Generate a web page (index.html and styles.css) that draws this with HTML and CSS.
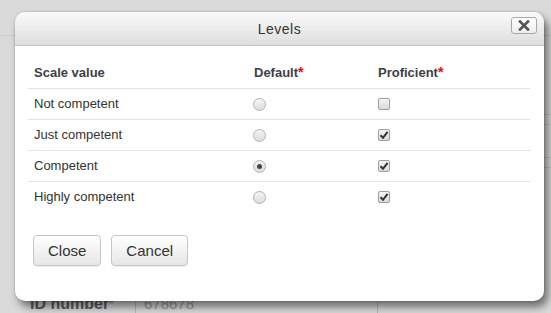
FILE: index.html
```html
<!DOCTYPE html>
<html>
<head>
<meta charset="utf-8">
<link rel="stylesheet" href="styles.css">
</head>
<body>
<div class="page">
  <div class="topline"></div>
  <div class="rightlines">
    <div class="rl rl1"></div>
    <div class="rl rl2"></div>
    <div class="rl rl3"></div>
    <div class="rl rl4"></div>
  </div>
  <div class="formrow">
    <div class="flabel">ID number<span class="freq">*</span></div>
    <div class="fvalue">678678</div>
    <div class="fextra"></div>
  </div>
</div>

<div class="dialog">
  <div class="dlg-head">
    <span></span>
    <span class="dlg-title">Levels</span>
    <button class="dlg-close" type="button">
      <svg width="12" height="11" viewBox="0 0 12 11"><path d="M2 1.5 L10 9.5 M10 1.5 L2 9.5" stroke="#555" stroke-width="2.6" stroke-linecap="square"/></svg>
    </button>
  </div>
  <div class="dlg-body">
    <table class="levels">
      <thead>
        <tr>
          <th class="c1">Scale value</th>
          <th class="c2">Default<span class="req">*</span></th>
          <th class="c3">Proficient<span class="req">*</span></th>
        </tr>
      </thead>
      <tbody>
        <tr>
          <td>Not competent</td>
          <td><span class="radio"></span></td>
          <td><span class="check"></span></td>
        </tr>
        <tr>
          <td>Just competent</td>
          <td><span class="radio"></span></td>
          <td><span class="check on"><svg width="10" height="10" viewBox="0 0 10 10"><path d="M1.5 5.2 L4 7.8 L8.6 1.8" fill="none" stroke="#333" stroke-width="2"/></svg></span></td>
        </tr>
        <tr>
          <td>Competent</td>
          <td><span class="radio on"></span></td>
          <td><span class="check on"><svg width="10" height="10" viewBox="0 0 10 10"><path d="M1.5 5.2 L4 7.8 L8.6 1.8" fill="none" stroke="#333" stroke-width="2"/></svg></span></td>
        </tr>
        <tr>
          <td>Highly competent</td>
          <td><span class="radio"></span></td>
          <td><span class="check on"><svg width="10" height="10" viewBox="0 0 10 10"><path d="M1.5 5.2 L4 7.8 L8.6 1.8" fill="none" stroke="#333" stroke-width="2"/></svg></span></td>
        </tr>
      </tbody>
    </table>
    <div class="actions">
      <button class="btn" type="button">Close</button>
      <button class="btn" type="button">Cancel</button>
    </div>
  </div>
</div>
</body>
</html>
```

FILE: styles.css
```css
html, body {
  margin: 0;
  padding: 0;
}
body {
  width: 551px;
  height: 313px;
  overflow: hidden;
  background: #dadada;
  font-family: "Liberation Sans", Arial, sans-serif;
  position: relative;
}
.page {
  width: 551px;
  height: 313px;
  position: relative;
}
.topline {
  height: 35px;
  border-bottom: 1px solid #cbcbcb;
}
.rightlines {
  margin-left: 544px;
  padding-top: 78px;
}
.rl {
  height: 0;
  border-top: 1px solid #c6c6c6;
}
.rl1 { margin-bottom: 9px; }
.rl2 { margin-bottom: 32px; }
.rl3 { margin-bottom: 9px; }
.formrow {
  position: absolute;
  left: 0;
  top: 292px;
  width: 551px;
  display: flex;
  height: 21px;
}
.flabel {
  width: 105px;
  padding-left: 30px;
  font-weight: bold;
  font-size: 16px;
  color: #5d5d63;
  line-height: 24px;
  border-right: 1px solid #b8b8b8;
}
.freq {
  color: #d08a8a;
  font-size: 12px;
  vertical-align: top;
}
.fvalue {
  width: 233px;
  padding-left: 8px;
  color: #9a9a9a;
  font-size: 15px;
  line-height: 24px;
  border-right: 1px solid #b8b8b8;
}
.dialog {
  position: absolute;
  left: 15px;
  top: 12px;
  width: 529px;
  background: #fff;
  border-radius: 10px;
  box-shadow: 4px 6px 9px rgba(0, 0, 0, 0.5), 0 0 2px rgba(0, 0, 0, 0.25);
  overflow: hidden;
}
.dlg-head {
  height: 33px;
  border-bottom: 1px solid #c4c4c4;
  background: linear-gradient(#fafafa, #dedede);
  display: grid;
  grid-template-columns: 1fr auto 1fr;
  align-items: center;
}
.dlg-title {
  font-size: 14px;
  letter-spacing: 0.5px;
  color: #333;
  padding-top: 1px;
}
.dlg-close {
  justify-self: end;
  align-self: start;
  margin: 5px 7px 0 0;
  width: 26px;
  height: 17px;
  padding: 0;
  border: 1px solid #a8a8a8;
  border-radius: 3px;
  background: linear-gradient(#ffffff, #ececec);
  display: flex;
  align-items: center;
  justify-content: center;
}
.dlg-body {
  padding: 12px 14px 35px 13px;
}
.levels {
  width: 502px;
  border-collapse: collapse;
  font-size: 13px;
  color: #333;
}
.levels th, .levels td {
  text-align: left;
  padding: 6px;
  line-height: 18px;
  height: 18px;
  vertical-align: middle;
}
.levels th {
  font-weight: bold;
  color: #3e3e48;
}
.levels td {
  border-top: 1px solid #e2e2e2;
}
.c1 { width: 208px; }
.c2 { width: 112px; }
.c3 { width: auto; }
.req {
  color: #f00;
  font-size: 14px;
  line-height: 10px;
  vertical-align: baseline;
}
.radio {
  display: block;
  width: 11px;
  height: 11px;
  margin-left: -1px;
  border: 1px solid #b3b3b3;
  border-radius: 50%;
  background: linear-gradient(#f4f4f4, #dcdcdc);
  position: relative;
}
.radio.on::after {
  content: "";
  position: absolute;
  left: 3px;
  top: 3px;
  width: 5px;
  height: 5px;
  border-radius: 50%;
  background: #444;
}
.check {
  display: flex;
  align-items: center;
  justify-content: center;
  width: 10px;
  height: 10px;
  border: 1px solid #9e9e9e;
  border-radius: 2px;
  background: linear-gradient(#f4f4f4, #d9d9d9);
}
.actions {
  margin-top: 23px;
  display: flex;
  gap: 10px;
  padding-left: 5px;
}
.btn {
  height: 31px;
  padding: 0 14px;
  font-family: "Liberation Sans", Arial, sans-serif;
  font-size: 15px;
  color: #333;
  border: 1px solid #c5c5c5;
  border-radius: 4px;
  background: linear-gradient(#ffffff, #e6e6e6);
  box-shadow: 0 1px 1px rgba(0, 0, 0, 0.06);
}
```
